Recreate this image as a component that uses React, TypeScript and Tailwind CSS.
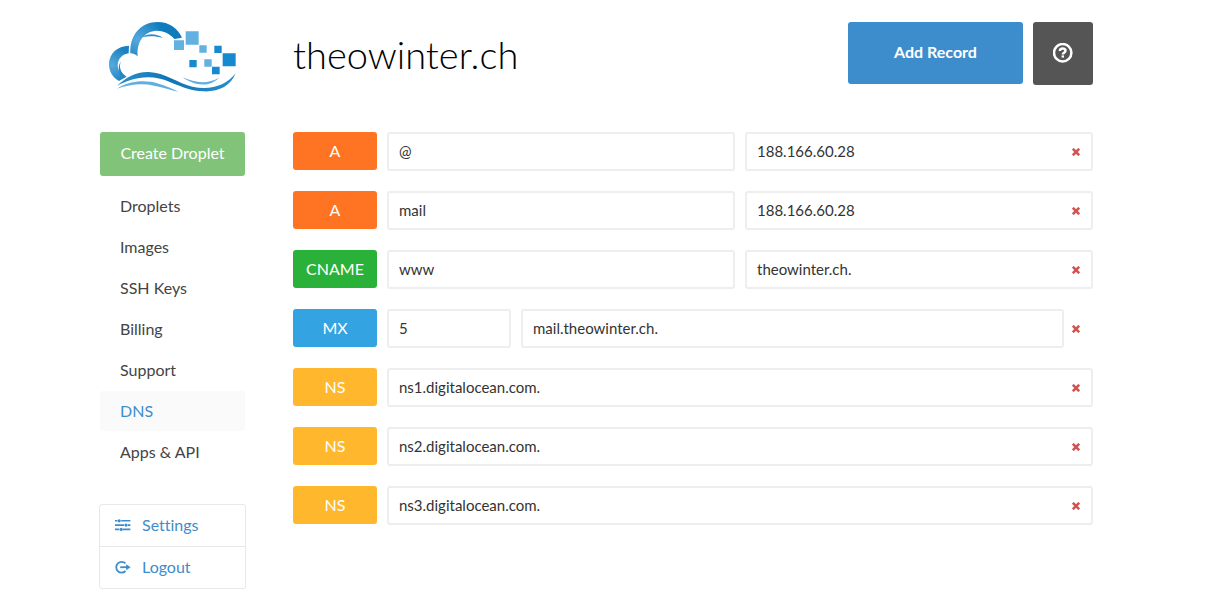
import React from "react";

type Field = { label: string; value: string; size: string };
type DnsRecord = { type: "A" | "CNAME" | "MX" | "NS"; fields: Field[] };

const half = "flex-1";

const records: DnsRecord[] = [
  { type: "A", fields: [{ label: "Hostname", value: "@", size: half }, { label: "IP address", value: "188.166.60.28", size: half }] },
  { type: "A", fields: [{ label: "Hostname", value: "mail", size: half }, { label: "IP address", value: "188.166.60.28", size: half }] },
  { type: "CNAME", fields: [{ label: "Name", value: "www", size: half }, { label: "Hostname", value: "theowinter.ch.", size: half }] },
  { type: "MX", fields: [{ label: "Priority", value: "5", size: "w-[124px] flex-none" }, { label: "Hostname", value: "mail.theowinter.ch.", size: half }] },
  { type: "NS", fields: [{ label: "Name server", value: "ns1.digitalocean.com.", size: half }] },
  { type: "NS", fields: [{ label: "Name server", value: "ns2.digitalocean.com.", size: half }] },
  { type: "NS", fields: [{ label: "Name server", value: "ns3.digitalocean.com.", size: half }] },
];

const badgeColors = {
  A: "bg-[#ff7422]",
  CNAME: "bg-[#2ab13a]",
  MX: "bg-[#33a3e2]",
  NS: "bg-[#ffb82d]",
};

const navItems = ["Droplets", "Images", "SSH Keys", "Billing", "Support", "DNS", "Apps & API"];

function Logo() {
  return (
    <svg viewBox="39 30 390 219" className="h-[73px] w-[130px]" aria-hidden="true">
      <defs>
        <radialGradient id="arch" gradientUnits="userSpaceOnUse" cx="128" cy="88" r="80">
          <stop offset="0" stopColor="#57a9dc" />
          <stop offset="1" stopColor="#0f7bbd" />
        </radialGradient>
        <radialGradient id="side" gradientUnits="userSpaceOnUse" cx="50" cy="165" r="60">
          <stop offset="0" stopColor="#57a9dc" />
          <stop offset="1" stopColor="#1a80c0" />
        </radialGradient>
        <linearGradient id="wave" x1="0" x2="1" y1="0" y2="0">
          <stop offset="0" stopColor="#2b8fcd" />
          <stop offset="0.45" stopColor="#0f75b6" />
          <stop offset="1" stopColor="#2b8fcd" />
        </linearGradient>
      </defs>
      <path fill="url(#arch)" d="M106 130C104 74 138 36 188 36C222 36 248 54 261 83L238 87C224 70 206 62 184 62C148 64 124 94 128 139C121 133 115 131 106 130Z" />
      <path fill="#2f8fcd" d="M141 82C160 68 187 72 204 84C183 78 162 77 141 82Z" />
      <path fill="url(#side)" d="M102 107L101 130C76 134 65 153 69 175C72 187 80 194 94 200L72 213C53 203 42 184 42 162C43 130 66 108 102 107Z" />
      <path fill="#2387c6" d="M78 153C70 173 78 188 94 200L85 205C69 190 67 170 78 153Z" />
      <path fill="url(#wave)" d="M66 228C91 203 123 185 161 186C211 188 246 219 292 230C345 242 394 227 422 190C407 229 370 246 325 244C254 241 225 204 163 202C126 201 95 212 66 228Z" />
      <path fill="#60afe0" d="M66 236C105 211 151 209 191 221C215 228 232 236 250 245C223 239 202 231 177 227C139 219 103 224 66 236Z" />
      <path fill="#60afe0" d="M263 202C302 220 340 222 372 203C344 232 299 229 263 202Z" />
      <path fill="#63b1e1" d="M237 91h30v29h-30zM272 64h39v40h-39zM313 106h22v22h-22zM328 148h22v22h-22z" />
      <path fill="#168ad0" d="M358 107h22v22h-22zM383 130h39v39h-39zM283 150h22v22h-22zM351 170h23v23h-23z" />
    </svg>
  );
}

function HelpIcon() {
  return (
    <svg viewBox="0 0 20 20" className="size-5" fill="none" stroke="#fff" aria-hidden="true">
      <circle cx="9.7" cy="9.7" r="8.7" strokeWidth="2.5" />
      <path d="M6.9 7.9C6.9 6.3 8 5.5 9.7 5.5s2.8 1 2.8 2.3c0 1.8-2.7 1.9-2.7 3.6" strokeWidth="2.5" />
      <path d="M8.6 12.4h2.4v2.2H8.6z" fill="#fff" stroke="none" />
    </svg>
  );
}

function SettingsIcon() {
  return (
    <svg viewBox="0 0 16 14" className="h-[14px] w-4" fill="#3d8dcd" aria-hidden="true">
      <path d="M0 2h2.4v1.6H0zM6.2 2H15.4v1.6H6.2zM0 6.3h9v1.6H0zM12.8 6.3h2.6v1.6h-2.6zM0 10.6h4.3v1.6H0zM8 10.6h7.4v1.6H8z" />
      <circle cx="4.2" cy="2.8" r="1.6" />
      <circle cx="11" cy="7.1" r="1.6" />
      <circle cx="6.2" cy="11.4" r="1.6" />
    </svg>
  );
}

function LogoutIcon() {
  return (
    <svg viewBox="0 0 16 14" className="h-[14px] w-4" fill="none" stroke="#3d8dcd" aria-hidden="true">
      <path d="M10.5 3.4A5.4 5.4 0 1 0 10.5 11" strokeWidth="1.8" />
      <path d="M5.2 7.2H12" strokeWidth="1.8" />
      <path d="M11.2 4.2L15.6 7.2L11.2 10.2z" fill="#3d8dcd" stroke="none" />
    </svg>
  );
}

function DeleteIcon() {
  return (
    <svg viewBox="0 0 8 8" className="size-2" stroke="#d35352" strokeWidth="2.6" aria-hidden="true">
      <path d="M0.8 0.8L7.2 7.2M7.2 0.8L0.8 7.2" />
    </svg>
  );
}

function RecordRow({ record, index }: { record: DnsRecord; index: number }) {
  const outside = record.type === "MX";
  return (
    <li className="relative flex items-start gap-[10px]">
      <span className={`flex h-[38px] w-[84px] flex-none items-center justify-center rounded-[3px] pb-px text-base text-white ${badgeColors[record.type]}`}>
        {record.type}
      </span>
      <div className={`flex min-w-0 flex-1 gap-[10px] ${outside ? "pr-[29px]" : ""}`}>
        {record.fields.map((field) => (
          <input
            key={field.label}
            id={`record-${index}-${field.label}`}
            aria-label={`${record.type} ${field.label}`}
            defaultValue={field.value}
            className={`h-[39px] min-w-0 rounded-[3px] border-2 border-[#eee] bg-white px-[10px] pb-0.5 text-[15px] text-[#333] outline-none focus:border-[#3d8dcd] ${field.size}`}
          />
        ))}
      </div>
      <button type="button" aria-label={`Delete ${record.type} record`} className="absolute top-3 right-[9px] flex size-4 items-center justify-center">
        <DeleteIcon />
      </button>
    </li>
  );
}

export default function App() {
  return (
    <div className="min-h-screen bg-white font-['Lato','Liberation_Sans',sans-serif] text-[#444] [font-variant-ligatures:none]">
      <div className="mx-auto w-full max-w-[1012px] pr-[19px]">
        <header className="flex h-[132px] items-start">
          <a href="#home" aria-label="Home" className="w-[193px] flex-none pt-5 pl-2">
            <Logo />
          </a>
          <h1 className="flex-1 pt-7 text-[38px] leading-[52px] font-light text-black">theowinter.ch</h1>
          <div className="flex gap-[10px] pt-[22px]">
            <button type="button" className="h-[62px] w-[175px] rounded-[3px] bg-[#3d8dcd] pb-0.5 text-base font-bold text-white">
              Add Record
            </button>
            <button type="button" aria-label="Help" className="flex h-[63px] w-[60px] items-center justify-center rounded-[3px] bg-[#555] pb-0.5">
              <HelpIcon />
            </button>
          </div>
        </header>
        <div className="flex items-start gap-12">
          <aside className="w-[145px] flex-none text-base">
            <button type="button" className="h-11 w-full rounded-[3px] bg-[#82c37a] pb-0.5 text-white">
              Create Droplet
            </button>
            <nav className="mt-[10px] flex flex-col gap-px">
              {navItems.map((item) => (
                <a
                  key={item}
                  href="#nav"
                  className={`flex h-10 items-center rounded-[3px] pb-px pl-5 ${item === "DNS" ? "bg-[#fafafa] text-[#3d8dcd]" : ""}`}
                >
                  {item}
                </a>
              ))}
            </nav>
            <div className="-mx-px mt-8 divide-y divide-[#e8e8e8] rounded-[3px] border border-[#e8e8e8] text-[#3d8dcd]">
              <a href="#settings" className="flex h-[42px] items-center gap-[11px] pb-px pl-[15px]">
                <SettingsIcon />
                Settings
              </a>
              <a href="#logout" className="flex h-[41px] items-center gap-[11px] pb-px pl-[15px]">
                <LogoutIcon />
                Logout
              </a>
            </div>
          </aside>
          <main className="min-w-0 flex-1">
            <ul className="flex flex-col gap-5">
              {records.map((record, index) => (
                <RecordRow key={index} record={record} index={index} />
              ))}
            </ul>
          </main>
        </div>
      </div>
    </div>
  );
}
